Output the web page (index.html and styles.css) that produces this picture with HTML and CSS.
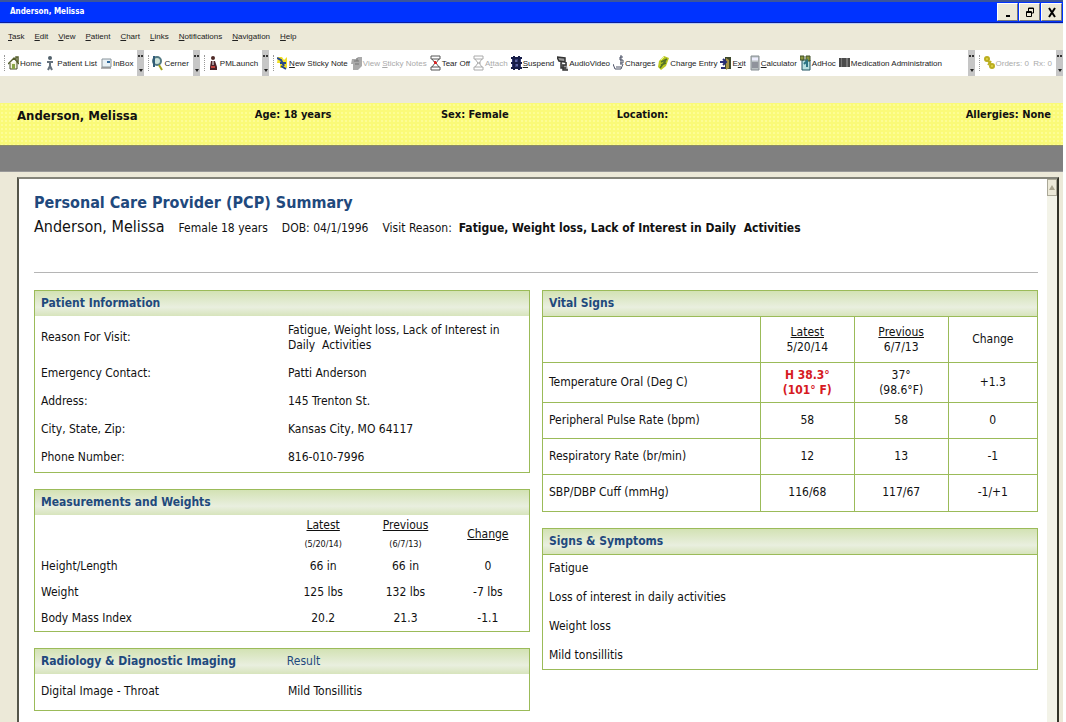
FILE: index.html
```
<!DOCTYPE html>
<html lang="en-US">
	<head>
		<meta charset="utf-8">
		<title>Anderson, Melissa</title>
		<link rel="stylesheet" href="styles.css">
	</head>
	<body>
		<div class="window">
			<header class="titlebar">
				<h1>Anderson, Melissa</h1>
				<div class="controls">
					<button aria-label="Minimize"><svg width="10" height="12" viewBox="0 0 10 12"><path d="M3 10h4" stroke="#000" stroke-width="2"/></svg></button>
					<button aria-label="Restore"><svg width="10" height="12" viewBox="0 0 10 12" fill="#ece9d8" stroke="#000"><path d="M3.500 2h5v5h-5zM3 2.500h6" /><path d="M1.500 5.500h5v5h-5zM1 6.500h6"/></svg></button>
					<button aria-label="Close"><svg width="10" height="12" viewBox="0 0 10 12"><path d="M2 2l6 9M8 2l-6 9" stroke="#000" stroke-width="2"/></svg></button>
				</div>
			</header>

			<nav class="menu">
				<a href="#"><u>T</u>ask</a>
				<a href="#"><u>E</u>dit</a>
				<a href="#"><u>V</u>iew</a>
				<a href="#"><u>P</u>atient</a>
				<a href="#"><u>C</u>hart</a>
				<a href="#"><u>L</u>inks</a>
				<a href="#"><u>N</u>otifications</a>
				<a href="#"><u>N</u>avigation</a>
				<a href="#"><u>H</u>elp</a>
			</nav>

			<div class="toolbar">
				<div class="group">
					<button><svg viewBox="0 0 11 16"><path d="M2 8v6h7V7" fill="#f4f4dc" stroke="#444a2c"/><path d="M0 9l6-6 5 6M8 5V2h2v5" fill="none" stroke="#555e2c" stroke-width="1.500"/><path d="M4 9h3v5H4z" fill="#89a545"/></svg>Home</button>
					<button><svg viewBox="0 0 11 16"><circle cx="5" cy="3" r="2" fill="#52616b"/><path d="M2 7h6M5 6v5l-2 4M5 11l2 4" fill="none" stroke="#65717d" stroke-width="2"/></svg>Patient List</button>
					<button><svg viewBox="0 0 11 16"><path d="M1 4h9v8H1z" fill="#e8f1f5" stroke="#89949b"/><path d="M6 6h3v2H6z" fill="#31699a"/><path d="M0 13h10" stroke="#666"/></svg>InBox</button>
				</div>
				<button class="more" aria-label="More buttons"></button>
				<div class="group">
					<button><svg viewBox="0 0 11 16"><circle cx="5" cy="6" r="4" fill="#cce3dc" stroke="#527983" stroke-width="2"/><path d="M2 1v11" stroke="#315c78" stroke-width="2"/><path d="M7 10l3 5" stroke="#a3a31c" stroke-width="2"/></svg>Cerner</button>
				</div>
				<button class="more" aria-label="More buttons"></button>
				<div class="group">
					<button><svg viewBox="0 0 11 16"><circle cx="5" cy="3" r="2" fill="#502b27"/><path d="M3 6h4l2 6v3H2v-3z" fill="#4a2328"/><path d="M5 6v4" stroke="#fff"/><path d="M3 12h4" stroke="#c2423d" stroke-width="2"/></svg>PMLaunch</button>
				</div>
				<button class="more" aria-label="More buttons"></button>
				<div class="group wide">
					<button><svg viewBox="0 0 11 16"><path d="M1 2h4l2 3 3-3v11H3V8H0z" fill="#f0df27"/><path d="M0 3l4 2 3 6M3 8h6M4 11l5 3" fill="none" stroke="#27488c" stroke-width="2"/></svg><span><u>N</u>ew Sticky Note</span></button>
					<button disabled><svg viewBox="0 0 11 16"><path d="M1 4h4l2-2h4v9l-4 4H2V9H0z" fill="#aaa"/><path d="M3 6h5M4 9h4M6 3v3" stroke="#777"/></svg><span>View <u>S</u>ticky Notes</span></button>
					<button><svg viewBox="0 0 11 16"><path d="M1 1h9v3H1zM1 12h9v3H1zM2 4l3 4-3 4M9 4L6 8l3 4" fill="none" stroke="#555"/><path d="M5 6v3M4 8h3" stroke="#d42929" stroke-width="2"/></svg>Tear Off</button>
					<button disabled><svg viewBox="0 0 11 16"><path d="M1 1h9v3H1zM1 12h9v3H1zM2 4l3 4-3 4M9 4L6 8l3 4M4 8h4" fill="none" stroke="#aaa"/></svg><span>A<u>t</u>tach</span></button>
					<button><svg viewBox="0 0 11 16"><path d="M1 3h9v10H1z" fill="#343b77"/><path d="M0 3h11M0 8h11M0 13h11M3 1v14M8 1v14" stroke="#171d48" stroke-width="2"/><path d="M5 5v2M6 9v2" stroke="#8791cc"/></svg><span><u>S</u>uspend</span></button>
					<button><svg viewBox="0 0 11 16"><path d="M0 2l8 1v4L2 6zM4 7v6h5M9 7v3H6v5h5" fill="#999" stroke="#333" stroke-width="1.500"/></svg>AudioVideo</button>
					<button><svg viewBox="0 0 11 16"><path d="M0 9l2 5h6l2-5M3 12h5M10 2H7v3h3v3H7M8 0v10" fill="none" stroke="#4c5266"/></svg>Charges</button>
					<button><svg viewBox="0 0 11 16"><path d="M1 6l5-5 5 2-3 8-5 4-3-3z" fill="#b9c721"/><path d="M3 7l6-3M3 10l5-2M2 13l6-8" stroke="#54722b" stroke-width="1.500"/><path d="M3 5l3-3" stroke="#ef8" /></svg>Charge Entry</button>
					<button><svg viewBox="0 0 11 16"><path d="M5 2h6v12H5z" fill="#3d482c"/><path d="M6 3l3 2v8l-3 2z" fill="#a69345"/><path d="M0 7h5M3 4l3 3-3 3M1 13h4" fill="none" stroke="#292e76" stroke-width="2"/></svg><span>E<u>x</u>it</span></button>
					<button><svg viewBox="0 0 11 16"><path d="M2 1h8v14H2z" fill="#b9c0c2" stroke="#868e92"/><path d="M3 4h6" stroke="#eef" stroke-width="3"/><path d="M3 8h6M3 10h6M3 12h6" stroke="#667"/></svg><span><u>C</u>alculator</span></button>
					<button><svg viewBox="0 0 11 16"><path d="M2 5h8v10H2z" fill="#b6dfe0" stroke="#215361"/><path d="M0 1h4v4H0zM6 1h4v5H6z" fill="#8a963d" stroke="#40502b"/><path d="M4 9l3-3v6" fill="none" stroke="#2b7484" stroke-width="2"/></svg>AdHoc</button>
					<button><svg viewBox="0 0 11 16"><path d="M0 3h11v9H0z" fill="#777"/><path d="M1 3v9M4 3v9M6 3v9M10 3v9" stroke="#222"/></svg>Medication Administration</button>
				</div>
				<button class="more" aria-label="More buttons"></button>
				<div class="group last">
					<button disabled><svg viewBox="0 0 11 16"><circle cx="3" cy="4" r="2" fill="#e0d64a" stroke="#bbae1f" stroke-width="2"/><circle cx="8" cy="11" r="2" fill="#e0d64a" stroke="#bbae1f" stroke-width="2"/><path d="M4 6l3 3M7 6l-3 4" stroke="#bbae1f" stroke-width="2"/></svg>Orders: 0&nbsp; Rx: 0</button>
				</div>
				<button class="more" aria-label="More buttons"></button>
			</div>

			<div class="banner">
				<strong class="name">Anderson, Melissa</strong>
				<span>Age: 18 years</span>
				<span>Sex: Female</span>
				<span>Location:</span>
				<span>Allergies: None</span>
			</div>
			<div class="strip"></div>

			<div class="frame">
				<main>
					<h2 class="title">Personal Care Provider (PCP) Summary</h2>
					<p class="summary">
						<span class="patient">Anderson, Melissa</span>
						<span>Female 18 years</span>
						<span>DOB: 04/1/1996</span>
						<span>Visit Reason:&nbsp; <strong>Fatigue, Weight loss, Lack of Interest in Daily&nbsp; Activities</strong></span>
					</p>
					<hr>

					<div class="columns">
						<div class="column">
							<section>
								<h3>Patient Information</h3>
								<table class="info">
									<tr class="tall"><th scope="row">Reason For Visit:</th><td>Fatigue, Weight loss, Lack of Interest in<br>Daily&nbsp; Activities</td></tr>
									<tr><th scope="row">Emergency Contact:</th><td>Patti Anderson</td></tr>
									<tr><th scope="row">Address:</th><td>145 Trenton St.</td></tr>
									<tr><th scope="row">City, State, Zip:</th><td>Kansas City, MO 64117</td></tr>
									<tr><th scope="row">Phone Number:</th><td>816-010-7996</td></tr>
								</table>
							</section>

							<section>
								<h3>Measurements and Weights</h3>
								<table class="measures">
									<thead>
										<tr>
											<td></td>
											<th scope="col"><u>Latest</u><br><small>(5/20/14)</small></th>
											<th scope="col"><u>Previous</u><br><small>(6/7/13)</small></th>
											<th scope="col"><u>Change</u></th>
										</tr>
									</thead>
									<tbody>
										<tr><th scope="row">Height/Length</th><td>66 in</td><td>66 in</td><td>0</td></tr>
										<tr><th scope="row">Weight</th><td>125 lbs</td><td>132 lbs</td><td>-7 lbs</td></tr>
										<tr><th scope="row">Body Mass Index</th><td>20.2</td><td>21.3</td><td>-1.1</td></tr>
									</tbody>
								</table>
							</section>

							<section>
								<h3 class="split">Radiology &amp; Diagnostic Imaging <span>Result</span></h3>
								<table class="info radiology">
									<tr><th scope="row">Digital Image - Throat</th><td>Mild Tonsillitis</td></tr>
								</table>
							</section>
						</div>

						<div class="column">
							<section>
								<h3>Vital Signs</h3>
								<table class="vitals">
									<thead>
										<tr>
											<td></td>
											<th scope="col"><u>Latest</u><br>5/20/14</th>
											<th scope="col"><u>Previous</u><br>6/7/13</th>
											<th scope="col">Change</th>
										</tr>
									</thead>
									<tbody>
										<tr class="temp"><th scope="row">Temperature Oral (Deg C)</th><td class="high">H 38.3°<br>(101° F)</td><td>37°<br>(98.6°F)</td><td>+1.3</td></tr>
										<tr><th scope="row">Peripheral Pulse Rate (bpm)</th><td>58</td><td>58</td><td>0</td></tr>
										<tr><th scope="row">Respiratory Rate (br/min)</th><td>12</td><td>13</td><td>-1</td></tr>
										<tr><th scope="row">SBP/DBP Cuff (mmHg)</th><td>116/68</td><td>117/67</td><td>-1/+1</td></tr>
									</tbody>
								</table>
							</section>

							<section>
								<h3 class="ruled">Signs &amp; Symptoms</h3>
								<ul>
									<li>Fatigue</li>
									<li>Loss of interest in daily activities</li>
									<li>Weight loss</li>
									<li>Mild tonsillitis</li>
								</ul>
							</section>
						</div>
					</div>
				</main>
				<div class="track">
					<button aria-label="Scroll up"><svg width="6" height="5" viewBox="0 0 6 5"><path d="M3 0l3 5H0z" fill="#aaa58f"/></svg></button>
				</div>
			</div>
		</div>
	</body>
</html>
```

FILE: styles.css
```
*,
*::before,
*::after {
	box-sizing: border-box;
}
body {
	background: #fff;
	color: #111;
	font: 12px/15px "DejaVu Sans Condensed", "DejaVu Sans", sans-serif;
	margin: 0;
}
h1,
h2,
h3,
p,
ul {
	margin: 0;
	padding: 0;
}
button {
	background: none;
	border: 0;
	color: inherit;
	font: inherit;
	padding: 0;
}
a {
	color: inherit;
	text-decoration: none;
}
.window {
	background: #ece9d8;
	display: flex;
	flex-direction: column;
	margin-right: 3px;
	min-height: 100vh;
}

/* title bar */
.titlebar {
	align-items: center;
	background: #0033ff;
	border-bottom: 1px solid #0a1e9c;
	border-top: 2px solid #3b559c;
	box-shadow: 0 1px #b9cdf5;
	display: flex;
	height: 23px;
	justify-content: space-between;
	padding: 0 1px 0 10px;
}
.titlebar h1 {
	color: #fff;
	font-size: 8px;
	line-height: 12px;
}
.controls {
	display: flex;
	gap: 1px;
}
.controls button {
	align-items: center;
	background: #ece9d8;
	border: 1px solid;
	border-color: #fff #777 #777 #fff;
	display: flex;
	height: 18px;
	justify-content: center;
	width: 21px;
}

/* menu and toolbar */
.menu,
.toolbar {
	color: #222;
	font-family: "Liberation Sans", sans-serif;
	font-size: 8px;
}
.menu {
	align-items: center;
	display: flex;
	gap: 10px;
	height: 27px;
	padding: 0 8px;
}
.toolbar {
	background: #fff;
	display: flex;
	height: 26px;
	margin-bottom: 27px;
}
.group {
	align-items: center;
	display: flex;
	gap: 4px;
	padding: 0 4px 0 8px;
	position: relative;
}
.group::before {
	border-left: 1px dotted #999;
	content: '';
	height: 16px;
	left: 4px;
	position: absolute;
}
.group.wide {
	flex: 1;
	gap: 3px;
}
.group.last {
	padding-left: 9px;
}
.group button {
	align-items: center;
	display: flex;
	gap: 1px;
	white-space: nowrap;
}
.group button:disabled {
	color: #aaa;
}
.group svg {
	height: 16px;
	width: 11px;
}
.more {
	background: #c6c6c6;
	flex: none;
	position: relative;
	width: 7px;
}
.more::before {
	border-left: 2px solid #333;
	border-right: 2px solid #333;
	content: '';
	height: 2px;
	left: 1px;
	position: absolute;
	top: 5px;
	width: 5px;
}
.more::after {
	border: 2px solid transparent;
	border-bottom: 0;
	border-top: 3px solid #222;
	bottom: 4px;
	content: '';
	left: 2px;
	position: absolute;
}

/* patient banner */
.banner {
	background: radial-gradient(#fdfd94 1px, transparent 1px) 0 0 / 4px 4px #fafa78;
	display: grid;
	font-size: 11px;
	font-weight: bold;
	grid-template-columns: 23% 18% 17% 1fr auto;
	height: 42px;
	padding: 4px 12px 0 17px;
}
.banner .name {
	font-size: 13px;
	line-height: 18px;
}
.strip {
	background: #808080;
	border-bottom: 1px solid #999;
	border-top: 1px solid #8b8b66;
	height: 27px;
}

/* document */
.frame {
	background: #fff;
	border-left: 2px solid #55554a;
	border-right: 2px solid #333328;
	border-top: 2px solid #85857a;
	display: flex;
	flex: 1;
	margin: 5px 4px 0 17px;
}
main {
	flex: 1;
	padding: 14px 9px 10px 15px;
}
.track {
	background: #f3f3e8;
	width: 10px;
}
.track button {
	align-items: center;
	background: #ece9d8;
	border: 1px solid #aaa897;
	display: flex;
	height: 17px;
	justify-content: center;
	width: 10px;
}
.title {
	color: #1f497d;
	font-size: 16px;
	line-height: 20px;
}
.summary {
	align-items: baseline;
	display: flex;
	gap: 14px;
	line-height: 24px;
	margin: 2px 0 32px;
}
.summary .patient {
	font-size: 16px;
}
hr {
	border: 0;
	border-top: 1px solid #b5b5b5;
	margin: 0 0 17px;
}
.columns {
	display: grid;
	gap: 12px;
	grid-template-columns: 1fr 1fr;
}
.column {
	display: flex;
	flex-direction: column;
	gap: 16px;
}
section {
	border: 1px solid #9bbb59;
}
h3 {
	background: linear-gradient(#d3e2b4, #e9efdf 65%, #d7e4bc);
	color: #1f497d;
	font-size: 12px;
	line-height: 25px;
	padding: 0 6px;
}
h3.split {
	display: grid;
	grid-template-columns: 51% 1fr;
}
h3 span {
	font-weight: normal;
}
h3.ruled {
	border-bottom: 1px solid #9bbb59;
}
table {
	border-collapse: collapse;
	table-layout: fixed;
	width: 100%;
}
th,
td {
	font-weight: normal;
	padding: 0;
	text-align: center;
}
th[scope="row"] {
	padding-left: 6px;
	text-align: left;
}
.info {
	margin-bottom: 1px;
}
.info th {
	width: 51%;
}
.info td {
	padding-left: 1px;
	text-align: left;
}
.info tr {
	height: 28px;
}
.info .tall {
	height: 43px;
}
.info.radiology tr {
	height: 35px;
}
.measures tr {
	height: 26px;
}
.measures thead tr {
	height: 38px;
	line-height: 18px;
}
.measures td:first-child {
	width: 50%;
}
.measures small {
	font-size: 9px;
}
.vitals th,
.vitals td {
	border: 1px solid #9bbb59;
	height: 36px;
}
.vitals tr > :first-child {
	border-left: 0;
	width: 44%;
}
.vitals tr > :nth-child(2) {
	width: 19%;
}
.vitals tr > :last-child {
	border-right: 0;
	width: 18%;
}
.vitals tr:last-child > * {
	border-bottom: 0;
}
.vitals thead tr > * {
	border-bottom: 1px solid #9bbb59;
	height: 46px;
}
.vitals .temp > * {
	height: 40px;
}
.vitals .high {
	color: #d61a1f;
	font-weight: bold;
}
ul {
	display: grid;
	gap: 14px;
	list-style: none;
	padding: 6px;
}
```
